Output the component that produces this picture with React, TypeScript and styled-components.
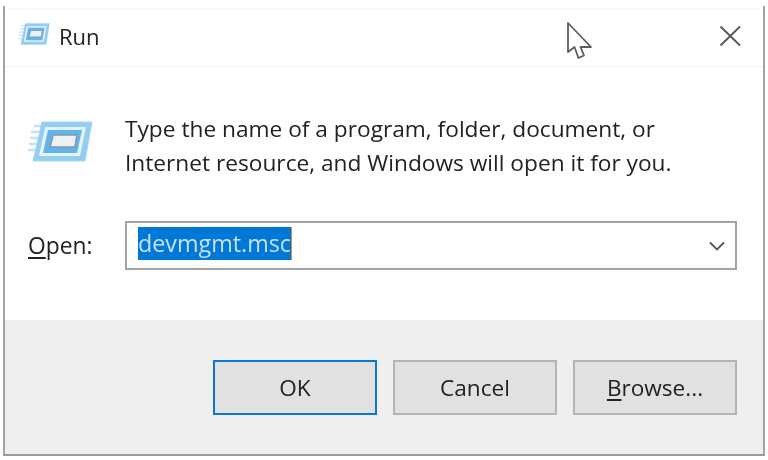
import React from "react";
import styled, { createGlobalStyle } from "styled-components";

const Global = createGlobalStyle`
  html, body { margin: 0; padding: 0; background: #fff; }
  body { width: 768px; height: 460px; overflow: hidden; font-family: "Open Sans", "Noto Sans", sans-serif; }
`;

const Page = styled.div`
  width: 768px;
  height: 460px;
  padding: 6px 3px 4px 3px;
  box-sizing: border-box;
  background: #fff;
  filter: blur(0.6px);
`;

const Window = styled.div`
  position: relative;
  height: 450px;
  box-sizing: border-box;
  border-left: 2px solid #a4a4a4;
  border-right: 2px solid #a4a4a4;
  border-bottom: 2px solid #9a9a9a;
  display: flex;
  flex-direction: column;
  color: #2a2a2a;
`;

const TitleBar = styled.header`
  height: 59px;
  margin-top: 2px;
  box-sizing: border-box;
  border-top: 1px solid #f8f8f8;
  border-bottom: 1px solid #f0f2f2;
  display: flex;
  align-items: center;
  padding: 0 21px 3px 13px;
  gap: 9px;
`;

const TitleIcon = styled.div`
  display: flex;
  margin-bottom: 4px;
`;

const Title = styled.span`
  flex: 1;
  font-size: 22px;
  line-height: 30px;
  color: #222;
`;

const CloseButton = styled.button`
  width: 24px;
  height: 24px;
  padding: 0;
  border: 0;
  background: none;
  display: flex;
  color: #555;
`;

const Body = styled.main`
  flex: 1;
  padding: 45px 26px 0 24px;
  display: flex;
  flex-direction: column;
`;

const Intro = styled.div`
  display: flex;
  gap: 32px;
`;

const LargeIcon = styled.div`
  margin-top: 9px;
  height: 41px;
  margin-left: -2px;
`;

const Message = styled.p`
  margin: 0;
  font-size: 22.7px;
  line-height: 34px;
  color: #222;
  white-space: nowrap;
`;

const OpenRow = styled.div`
  margin-top: 41px;
  display: flex;
  align-items: center;
`;

const OpenLabel = styled.label`
  width: 96px;
  font-size: 22.8px;
  line-height: 30px;
  color: #222;
  margin-left: -1px;
  margin-right: 1px;
  u { text-underline-offset: 3px; text-decoration-thickness: 2px; }
`;

const Combo = styled.div`
  flex: 1;
  height: 49px;
  box-sizing: border-box;
  border: 2px solid #a3a3a3;
  background: #fff;
  display: flex;
  align-items: center;
  justify-content: space-between;
  padding: 0 10px 4px 11px;
`;

const Selected = styled.span`
  background: #0078d7;
  color: #c6e0f6;
  font-size: 23.3px;
  line-height: 33px;
  height: 33px;
  border-right: 1px solid #d98a3a;
`;

const Chevron = styled.svg`
  margin-top: 4px;
`;

const Footer = styled.footer`
  height: 134px;
  flex-shrink: 0;
  background: #efefef;
  box-sizing: border-box;
  padding: 40px 25px 0 208px;
  display: flex;
  gap: 16px;
`;

const DialogButton = styled.button<{ $focused?: boolean }>`
  width: 164px;
  height: 55px;
  box-sizing: border-box;
  border: 2px solid ${(p) => (p.$focused ? "#0a78d4" : "#b4b4b4")};
  background: #e1e1e1;
  color: #222;
  font-family: inherit;
  font-size: 22.6px;
  padding: 0;
  u { text-underline-offset: 3px; text-decoration-thickness: 2px; }
`;

const Cursor = styled.svg`
  position: absolute;
  left: 561px;
  top: 16px;
`;

const RunIcon = ({ width, height }: { width: number; height: number }) => (
  <svg width={width} height={height} viewBox="0 0 66 41" preserveAspectRatio="none">
    <path d="M7 5h12M4 11h10M3 17h9M2 23h8M1 29h8" stroke="#c4e1f5" strokeWidth="2.4" />
    <path d="M15 1H65L58 40H6Z" fill="#93cdf0" stroke="#a9d6f2" strokeWidth="1" />
    <path d="M18 6H59L53 35H12Z" fill="#e3f2fb" />
    <path d="M21 9H55L50 32H16Z" fill="#62b4ea" />
    <path d="M26 14H50L48 26H23Z" fill="#edf1f4" stroke="#7d9bb0" strokeWidth="1.6" />
  </svg>
);

export default function App() {
  return (
    <>
      <Global />
      <Page>
        <Window>
          <TitleBar>
            <TitleIcon>
              <RunIcon width={32} height={22} />
            </TitleIcon>
            <Title>Run</Title>
            <CloseButton aria-label="Close">
              <svg width="24" height="24" viewBox="0 0 24 24" fill="none" stroke="currentColor" strokeWidth="1.8">
                <path d="M2.5 2.5 22 21.5M22 2.5 2.5 21.5" />
              </svg>
            </CloseButton>
          </TitleBar>
          <Body>
            <Intro>
              <LargeIcon>
                <RunIcon width={66} height={41} />
              </LargeIcon>
              <Message>
                Type the name of a program, folder, document, or
                <br />
                Internet resource, and Windows will open it for you.
              </Message>
            </Intro>
            <OpenRow>
              <OpenLabel>
                <u>O</u>pen:
              </OpenLabel>
              <Combo>
                <Selected>devmgmt.msc</Selected>
                <Chevron width="16" height="10" viewBox="0 0 16 10" fill="none" stroke="#555" strokeWidth="1.8">
                  <path d="M1 1.5 8 8.5 15 1.5" />
                </Chevron>
              </Combo>
            </OpenRow>
          </Body>
          <Footer>
            <DialogButton $focused>OK</DialogButton>
            <DialogButton>Cancel</DialogButton>
            <DialogButton>
              <u>B</u>rowse...
            </DialogButton>
          </Footer>
          <Cursor width="28" height="40" viewBox="0 0 28 40">
            <path
              d="M2 1V30L8.5 25 12.5 36 18 33.5 14.5 25H25Z"
              fill="#fff"
              stroke="#5e5e5e"
              strokeWidth="1.8"
              strokeLinejoin="round"
            />
          </Cursor>
        </Window>
      </Page>
    </>
  );
}
